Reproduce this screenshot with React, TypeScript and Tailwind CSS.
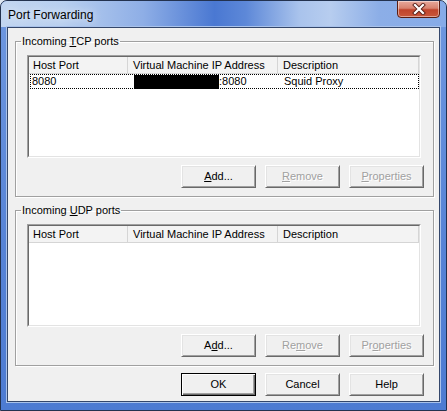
import type { ReactNode } from "react";

const font = { fontFamily: '"Liberation Sans", Arial, sans-serif' };

function Btn({
  children,
  disabled,
  isDefault,
}: {
  children: ReactNode;
  disabled?: boolean;
  isDefault?: boolean;
}) {
  return (
    <div
      className={
        "w-[75px] h-[23px] flex items-center justify-center bg-[#f0f0f0] text-[11px] leading-[13px] " +
        (isDefault
          ? "border border-black shadow-[inset_1px_1px_0_#fff,inset_-1px_-1px_0_#696969,inset_-2px_-2px_0_#a0a0a0]"
          : "border border-t-[#fff] border-l-[#fff] border-r-[#696969] border-b-[#696969] shadow-[inset_1px_1px_0_#e3e3e3,inset_-1px_-1px_0_#a0a0a0]") +
        (disabled ? " text-[#a0a0a0] [text-shadow:1px_1px_0_#fff]" : " text-black")
      }
    >
      {children}
    </div>
  );
}

function U({ children }: { children: ReactNode }) {
  return <span className="underline underline-offset-[1px] decoration-1">{children}</span>;
}

function PortList({ rows }: { rows: { host: string; ip: string; desc: string }[] }) {
  return (
    <div className="w-[394px] border border-t-[#a0a0a0] border-l-[#a0a0a0] border-r-[#fff] border-b-[#fff]">
      <div className="bg-white border border-t-[#696969] border-l-[#696969] border-r-[#e3e3e3] border-b-[#e3e3e3]">
        {/* header */}
        <div className="h-[17px] flex bg-[#f3f3f3] border-b border-[#d5d5d5] text-[11px] leading-[13px]">
          <div className="w-[99px] pl-[4px] pt-[2px] border-r border-[#d5d5d5]">Host Port</div>
          <div className="w-[150px] pl-[5px] pt-[2px] border-r border-[#d5d5d5]">
            Virtual Machine IP Address
          </div>
          <div className="w-[141px] pl-[5px] pt-[2px] border-r border-[#d5d5d5]">Description</div>
        </div>
        {/* rows */}
        <div className="h-[82px]">
          {rows.map((r) => (
            <div
              key={r.host}
              className="ml-[1px] w-[389px] h-[15px] flex items-center border border-dotted border-black text-[11px] leading-[13px]"
            >
              <div className="w-[98px] pl-[1px]">{r.host}</div>
              <div className="w-[150px] pl-[5px] flex items-center">
                <span className="inline-block w-[85px] h-[14px] bg-black" />
                <span>{r.ip}</span>
              </div>
              <div className="pl-[5px]">{r.desc}</div>
            </div>
          ))}
        </div>
      </div>
    </div>
  );
}

function Group({
  label,
  rows,
  secondary,
}: {
  label: ReactNode;
  rows: { host: string; ip: string; desc: string }[];
  secondary?: boolean;
}) {
  return (
    <fieldset className="border border-[#a0a0a0] shadow-[inset_1px_1px_0_#fff,1px_1px_0_#fff] pl-[11px] pr-[9px] pb-[8px]">
      <legend className="-ml-[6px] px-[1px] text-[11px] leading-[13px]">{label}</legend>
      <div className="mt-[7px]">
        <PortList rows={rows} />
      </div>
      <div className="mt-[7px] flex justify-end gap-[9px]">
        {secondary ? (
          <>
            <Btn>
              A<U>d</U>d...
            </Btn>
            <Btn disabled>
              Re<U>m</U>ove
            </Btn>
            <Btn disabled>
              Pr<U>o</U>perties
            </Btn>
          </>
        ) : (
          <>
            <Btn>
              <U>A</U>dd...
            </Btn>
            <Btn disabled>
              <U>R</U>emove
            </Btn>
            <Btn disabled>
              <U>P</U>roperties
            </Btn>
          </>
        )}
      </div>
    </fieldset>
  );
}

export default function App() {
  return (
    <div className="w-[447px] h-[411px] bg-[#dfe8f3]" style={font}>
      <div className="w-[447px] h-[411px] flex flex-col rounded-t-[7px] border border-[#23324f] bg-[linear-gradient(180deg,#6f98e0_0%,#5683d6_60%,#4d7bd2_100%)] overflow-hidden">
        {/* title bar */}
        <div className="h-[26px] flex items-start justify-between bg-[linear-gradient(90deg,#c2d6f1_0%,#b8cfef_14%,#8eaee6_32%,#4a78d2_48%,#5d88d8_55%,#a9c3ec_67%,#b7cdef_74%,#8caee7_85%,#86abe8_100%)]">
          <span className="pl-[7px] pt-[7px] text-[12px] leading-[14px] text-black [text-shadow:0_0_8px_#fff]">
            Port Forwarding
          </span>
          <div className="mr-[6px] w-[43px] h-[18px] -mt-[1px] rounded-b-[4px] border border-[#5a1d12] flex items-center justify-center bg-[linear-gradient(180deg,#e7a99c_0%,#d8826f_45%,#c0442c_55%,#c9573c_100%)] shadow-[inset_0_0_0_1px_rgba(255,255,255,0.45)]">
            <svg width="14" height="12" viewBox="0 0 14 12">
              <path d="M3 2 L11 10 M11 2 L3 10" stroke="#5a2018" strokeWidth="4" strokeLinecap="square" />
              <path d="M3 2 L11 10 M11 2 L3 10" stroke="#fff" strokeWidth="2.2" strokeLinecap="square" />
            </svg>
          </div>
        </div>
        {/* client area */}
        <div className="mx-[6px] mb-[8px] flex-1 border border-[#34476b] shadow-[0_0_0_1px_#a9c2ea] bg-[#f0f0f0] pl-[7px] pr-[5px] pt-[7px] text-black">
          <Group
            label={
              <>
                Incoming <U>T</U>CP ports
              </>
            }
            rows={[{ host: "8080", ip: ":8080", desc: "Squid Proxy" }]}
          />
          <div className="h-[7px]" />
          <Group
            label={
              <>
                Incoming <U>U</U>DP ports
              </>
            }
            rows={[]}
            secondary
          />
          <div className="mt-[7px] pr-[10px] flex justify-end gap-[9px]">
            <Btn isDefault>OK</Btn>
            <Btn>Cancel</Btn>
            <Btn>Help</Btn>
          </div>
        </div>
      </div>
    </div>
  );
}
